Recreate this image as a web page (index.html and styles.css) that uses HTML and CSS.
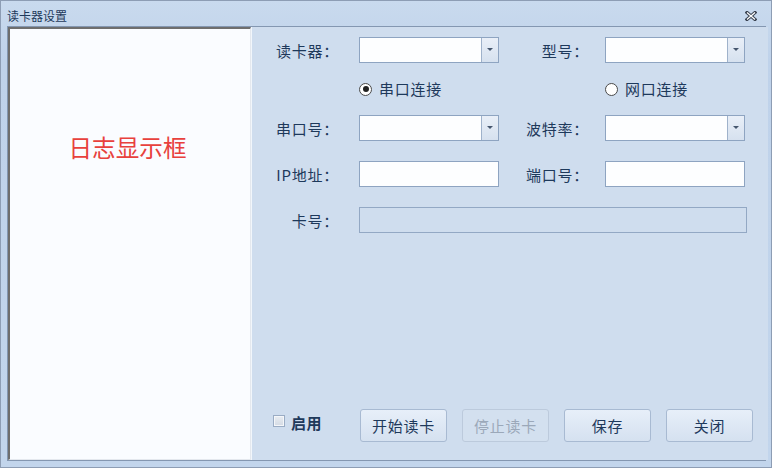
FILE: index.html
```html
<!DOCTYPE html>
<html>
<head>
    <title>读卡器设置</title>
    <link rel="stylesheet" href="styles.css">
</head>
<body>
<div class="window">
    <div class="titlebar">
        <span class="title">读卡器设置</span>
        <svg class="close" width="12" height="10" viewBox="0 0 12 10">
            <path d="M2 1.5 L10 8.5 M10 1.5 L2 8.5" stroke="#3a4250" stroke-width="3.2" stroke-linecap="square"/>
            <path d="M2 1.5 L10 8.5 M10 1.5 L2 8.5" stroke="#ffffff" stroke-width="1.2"/>
        </svg>
    </div>
    <div class="body">
        <div class="log">日志显示框</div>
        <div class="form">
            <div class="grid">
                <label>读卡器：</label>
                <div class="combo"><span class="drop"></span></div>
                <label>型号：</label>
                <div class="combo"><span class="drop"></span></div>

                <span></span>
                <div class="radio-cell"><span class="radio checked"></span>串口连接</div>
                <span></span>
                <div class="radio-cell"><span class="radio"></span>网口连接</div>

                <label>串口号：</label>
                <div class="combo"><span class="drop"></span></div>
                <label>波特率：</label>
                <div class="combo"><span class="drop"></span></div>

                <label>IP地址：</label>
                <input type="text">
                <label>端口号：</label>
                <input type="text">

                <label>卡号：</label>
                <input type="text" class="card" disabled>
            </div>

            <div class="footer">
                <div class="enable"><span class="check"></span>启用</div>
                <button type="button">开始读卡</button>
                <button type="button" disabled>停止读卡</button>
                <button type="button">保存</button>
                <button type="button">关闭</button>
            </div>
        </div>
    </div>
</div>
</body>
</html>
```

FILE: styles.css
```css
html, body {
    margin: 0;
    padding: 0;
    background-color: #c2d5ec;
    font-family: "Noto Sans CJK SC", "Noto Sans", sans-serif;
    color: #1e395b;
}

.window {
    width: 772px;
    height: 468px;
    box-sizing: border-box;
    border: 1px solid #8d9db4;
    background: linear-gradient(#c9daee, #bfd2ea 60px, #c2d5ec);
    display: flex;
    flex-direction: column;
}

.titlebar {
    height: 25px;
    display: flex;
    justify-content: space-between;
    align-items: center;
    padding: 5px 14px 0 6px;
    box-sizing: border-box;
}

.title {
    font-size: 12px;
    line-height: 14px;
}

.close {
    display: block;
}

.body {
    flex: 1;
    display: flex;
    margin: 0 5px 6px 6px;
    border: 1px solid #8497b1;
}

.log {
    flex: 0 0 235px;
    background-color: #fafcff;
    border-top: 2px solid #6e6e6e;
    border-left: 2px solid #6e6e6e;
    border-right: 1px solid #e4e8ee;
    border-bottom: 1px solid #e4e8ee;
    text-align: center;
    padding: 103px 5px 0 0;
    font-size: 23.6px;
    line-height: 30px;
    color: #e8413d;
}

.form {
    flex: 1;
    background-color: #cfddee;
    border-left: 1px solid #f2f6fb;
    display: flex;
    flex-direction: column;
    padding: 10px 0 18px 23px;
    font-size: 15px;
    letter-spacing: 0.75px;
}

.grid {
    display: grid;
    grid-template-columns: 84px 140px 106px 140px;
    grid-template-rows: 26px 12px 26px 26px 26px;
    row-gap: 20px;
    align-items: center;
}

label {
    text-align: right;
    padding-right: 20px;
    white-space: nowrap;
}

.grid label:nth-of-type(even) {
    padding-right: 16px;
}

.combo {
    height: 26px;
    box-sizing: border-box;
    border: 1px solid #8ea4c1;
    background-color: #fdfeff;
    display: flex;
    justify-content: flex-end;
}

.drop {
    width: 16px;
    border-left: 1px solid #9fb2cb;
    background: linear-gradient(#e9eff8, #d6e1ef);
    position: relative;
}

.drop::after {
    content: "";
    position: absolute;
    left: 5px;
    top: 10px;
    border-left: 3px solid transparent;
    border-right: 3px solid transparent;
    border-top: 3px solid #45566e;
}

input[type="text"] {
    height: 26px;
    box-sizing: border-box;
    border: 1px solid #8ea4c1;
    background-color: #fdfeff;
    margin: 0;
    padding: 0 4px;
    font-family: inherit;
}

.card {
    grid-column: 2 / 5;
    width: 388px;
    background-color: #cfddee !important;
    border-color: #93a8c4 !important;
}

.radio-cell {
    display: flex;
    align-items: center;
    line-height: 18px;
    white-space: nowrap;
}

.radio {
    width: 11px;
    height: 11px;
    border: 1px solid #4a4a4a;
    border-radius: 50%;
    background-color: #ffffff;
    margin-right: 7px;
    position: relative;
}

.radio.checked::after {
    content: "";
    position: absolute;
    left: 2.5px;
    top: 2.5px;
    width: 6px;
    height: 6px;
    border-radius: 50%;
    background-color: #222222;
}

.footer {
    margin-top: auto;
    display: flex;
    align-items: center;
}

.enable {
    width: 87px;
    margin-left: -2px;
    display: flex;
    align-items: center;
    font-weight: bold;
    letter-spacing: 0.5px;
    position: relative;
    top: -3px;
}

.check {
    width: 10px;
    height: 10px;
    border: 1px solid #9aacc4;
    background: linear-gradient(#e9edf2, #d3dae4);
    box-shadow: inset 0 0 0 1px #f4f6f9;
    margin-right: 6px;
    position: relative;
    top: -2px;
}

button {
    width: 87px;
    height: 33px;
    margin-right: 15px;
    border: 1px solid #a8bad2;
    border-radius: 3px;
    background: linear-gradient(#e7eff9, #d5e1f0);
    color: #1e395b;
    font-family: inherit;
    font-size: 15px;
    letter-spacing: 0.75px;
    padding: 0;
}

button:disabled {
    border-color: #bccadc;
    background: #d3e0ef;
    color: #9ba8b9;
}
```
